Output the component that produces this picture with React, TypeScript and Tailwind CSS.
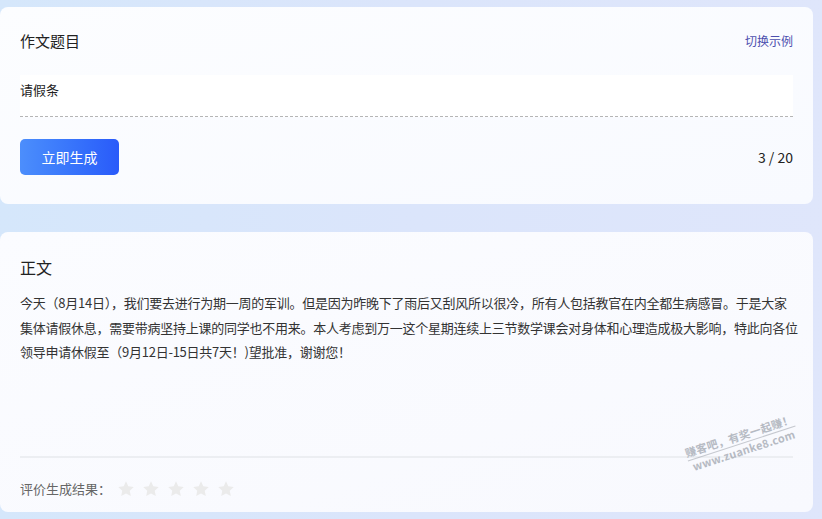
const font = { fontFamily: '"Noto Sans CJK SC", "Noto Sans", sans-serif' };

function Star() {
  return (
    <svg width="18" height="18" viewBox="0 0 24 24" className="fill-[#ebebeb]">
      <path d="M12 1.8l3.1 6.6 7.2.9-5.3 5 1.4 7.1L12 17.9l-6.4 3.5 1.4-7.1-5.3-5 7.2-.9z" />
    </svg>
  );
}

export default function App() {
  return (
    <div
      style={font}
      className="relative flex h-[519px] w-[822px] flex-col gap-[28px] overflow-hidden bg-gradient-to-r from-[#d5e7fb] via-[#dbe5fb] to-[#dfe6fb] pb-[7px] pr-[9px] pt-[7px] text-[#222]"
    >
      {/* topic card */}
      <div className="flex h-[197px] flex-col rounded-[8px] bg-gradient-to-br from-[#fcfdff] to-[#f8faff] px-5 pt-[23px]">
        <div className="flex h-[22px] items-center justify-between">
          <span className="text-[15px]">作文题目</span>
          <span className="text-[12px] text-[#4c4fae]">切换示例</span>
        </div>
        <div className="mt-[23px] h-[42px] border-b border-dashed border-[#b5b5b5] bg-white pt-[5px] text-[13px] leading-[20px]">
          请假条
        </div>
        <div className="mt-[22px] flex items-center justify-between">
          <button className="h-[36px] w-[99px] rounded-[5px] bg-gradient-to-r from-[#4c8efc] to-[#2a5afa] text-[14px] text-white">
            立即生成
          </button>
          <span className="whitespace-pre text-[14px]">3 / 20</span>
        </div>
      </div>

      {/* result card */}
      <div className="flex h-[280px] flex-col rounded-[8px] bg-gradient-to-br from-[#fbfcff] to-[#f8f9fe] pt-[23px]">
        <div className="px-5 text-[16px] leading-[24px]">正文</div>
        <p className="mt-[12px] whitespace-nowrap px-5 text-[13px] leading-[24.5px] tracking-[-0.25px] text-[#333]">
          今天（8月14日），我们要去进行为期一周的军训。但是因为昨晚下了雨后又刮风所以很冷，所有人包括教官在内全都生病感冒。于是大家
          <br />
          集体请假休息，需要带病坚持上课的同学也不用来。本人考虑到万一这个星期连续上三节数学课会对身体和心理造成极大影响，特此向各位
          <br />
          领导申请休假至（9月12日-15日共7天！)望批准，谢谢您！
        </p>
        <div className="flex-1" />
        <div className="mx-5 border-t-2 border-[#eceef2]" />
        <div className="mb-[11px] mt-[19px] flex h-[24px] items-center px-5">
          <span className="text-[13px] text-[#666]">评价生成结果：</span>
          <div className="ml-[6px] flex gap-[7px]">
            <Star />
            <Star />
            <Star />
            <Star />
            <Star />
          </div>
        </div>
      </div>

      {/* watermark */}
      <div className="pointer-events-none absolute left-[685px] top-[428px] -rotate-[18deg] font-bold text-[#9aa0aa] opacity-70">
        <div className="relative whitespace-pre-line text-center text-[11px] leading-[15px] tracking-[0.3px]">
          {"赚客吧，有奖一起赚！\nwww.zuanke8.com"}
          <div className="absolute left-0 top-[15px] h-px w-full bg-[#b0b4bc]" />
        </div>
      </div>
    </div>
  );
}
